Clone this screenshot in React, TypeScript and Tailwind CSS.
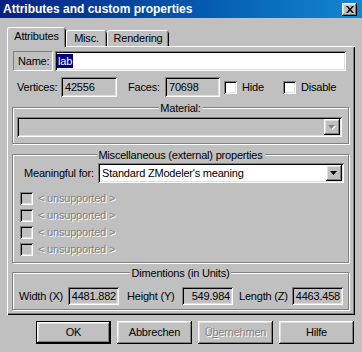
import React from "react";

const raised =
  "shadow-[inset_-1px_-1px_0_#000,inset_1px_1px_0_#fff,inset_-2px_-2px_0_#808080,inset_2px_2px_0_#dfdfdf]";
const sunken =
  "shadow-[inset_1px_1px_0_#808080,inset_-1px_-1px_0_#fff,inset_2px_2px_0_#000,inset_-2px_-2px_0_#dfdfdf]";
const etched = "border border-[#808080] shadow-[inset_1px_1px_0_#fff,1px_1px_0_#fff]";
const disabledText = "text-[#808080] [text-shadow:1px_1px_0_#fff]";

function Check({ disabled = false }: { disabled?: boolean }) {
  return (
    <div
      className={`w-[13px] h-[13px] shrink-0 ${sunken} ${disabled ? "bg-[#c0c0c0]" : "bg-white"}`}
    />
  );
}

function Arrow({ disabled = false }: { disabled?: boolean }) {
  return (
    <div className={`w-[16px] h-[16px] bg-[#c0c0c0] ${raised} flex items-center justify-center`}>
      <svg width="8" height="5" viewBox="0 0 8 5">
        {disabled && <path d="M1 1h7L4.5 5z" fill="#fff" />}
        <path d="M0 0h7L3.5 4z" fill={disabled ? "#808080" : "#000"} />
      </svg>
    </div>
  );
}

function Group({
  label,
  className,
  children,
}: {
  label: string;
  className: string;
  children?: React.ReactNode;
}) {
  return (
    <div className={`relative ${etched} ${className}`}>
      <span className="absolute left-1/2 top-0 -translate-x-1/2 -translate-y-1/2 bg-[#c0c0c0] px-[2px] leading-[13px] whitespace-nowrap">
        {label}
      </span>
      {children}
    </div>
  );
}

function Btn({
  children,
  def = false,
  disabled = false,
}: {
  children: React.ReactNode;
  def?: boolean;
  disabled?: boolean;
}) {
  return (
    <div
      className={`w-[75px] h-[23px] flex ${def ? "border border-black" : ""} bg-[#c0c0c0]`}
    >
      <div className={`flex-1 flex items-center justify-center ${raised} ${disabled ? disabledText : ""}`}>
        {children}
      </div>
    </div>
  );
}

export default function App() {
  return (
    <div className="w-[362px] h-[352px] bg-[#c0c0c0] flex flex-col overflow-hidden font-['Liberation_Sans',Arial,sans-serif] text-[11px] tracking-[-0.2px] text-black leading-[13px]">
      {/* title bar */}
      <div className="h-[18px] shrink-0 flex items-center bg-gradient-to-r from-[#0a1f84] to-[#1487d2] pl-[3px] pr-[5px]">
        <span className="text-white font-bold text-[12px] tracking-normal flex-1 whitespace-nowrap">
          Attributes and custom properties
        </span>
        <div className={`w-[15px] h-[13px] bg-[#c0c0c0] ${raised} flex items-center justify-center`}>
          <svg width="8" height="7" viewBox="0 0 8 7">
            <path d="M0 0h2l2 2.5L6 0h2L5 3.5 8 7H6L4 4.5 2 7H0l3-3.5z" fill="#000" />
          </svg>
        </div>
      </div>

      {/* tabs */}
      <div className="mt-[9px] h-[19px] ml-[7px] flex items-end">
        <div className="relative z-10 w-[59px] h-[20px] -mb-[1px] bg-[#c0c0c0] rounded-t-[3px] shadow-[inset_1px_0_0_#fff,inset_0_1px_0_#fff,inset_-1px_0_0_#000,inset_-2px_0_0_#808080] flex items-center justify-center pb-[2px]">
          Attributes
        </div>
        <div className="w-[41px] h-[16px] rounded-t-[3px] shadow-[inset_1px_0_0_#fff,inset_0_1px_0_#fff,inset_-1px_0_0_#000,inset_-2px_0_0_#808080] flex items-center justify-center">
          Misc.
        </div>
        <div className="w-[62px] h-[16px] rounded-t-[3px] shadow-[inset_1px_0_0_#fff,inset_0_1px_0_#fff,inset_-1px_0_0_#000,inset_-2px_0_0_#808080] flex items-center justify-center">
          Rendering
        </div>
      </div>

      {/* panel */}
      <div className="ml-[7px] w-[348px] h-[269px] shrink-0 flex flex-col shadow-[inset_1px_1px_0_#fff,inset_-1px_-1px_0_#000,inset_-2px_-2px_0_#808080]">
        {/* name row */}
        <div className="mt-[5px] ml-[6px] flex h-[20px]">
          <div className="w-[40px] h-[20px] border border-[#808080] border-r-white border-b-white flex items-center pl-[4px]">
            Name:
          </div>
          <div className={`ml-[2px] w-[291px] h-[20px] bg-white ${sunken} flex items-center pl-[2px]`}>
            <span className="bg-[#000080] text-white px-[1px] leading-[14px]">lab</span>
          </div>
        </div>

        {/* vertices row */}
        <div className="mt-[6px] ml-[10px] flex items-center h-[20px]">
          <span className="w-[44px]">Vertices:</span>
          <div className={`w-[56px] h-[20px] ${sunken} flex items-center pl-[4px]`}>42556</div>
          <span className="ml-[11px] w-[37px]">Faces:</span>
          <div className={`w-[55px] h-[20px] ${sunken} flex items-center pl-[4px]`}>70698</div>
          <div className="ml-[4px]">
            <Check />
          </div>
          <span className="ml-[5px] w-[41px]">Hide</span>
          <Check />
          <span className="ml-[5px]">Disable</span>
        </div>

        {/* material */}
        <Group label="Material:" className="mt-[10px] ml-[5px] w-[337px] h-[37px] shrink-0">
          <div className={`mt-[9px] ml-[4px] w-[325px] h-[20px] bg-[#c0c0c0] ${sunken} flex items-center justify-end pr-[2px]`}>
            <Arrow disabled />
          </div>
        </Group>

        {/* misc */}
        <Group
          label="Miscellaneous (external) properties"
          className="mt-[10px] ml-[5px] w-[337px] h-[109px] shrink-0 flex flex-col"
        >
          <div className="mt-[8px] ml-[11px] flex items-center h-[20px]">
            <span className="w-[74px] whitespace-nowrap">Meaningful for:</span>
            <div className={`w-[246px] h-[20px] bg-white ${sunken} flex items-center pl-[4px] pr-[2px]`}>
              <span className="flex-1">Standard ZModeler's meaning</span>
              <Arrow />
            </div>
          </div>
          {[9, 4, 4, 4].map((m, i) => (
            <div
              key={i}
              className={`ml-[7px] flex items-center h-[13px] ${
                m === 9 ? "mt-[9px]" : "mt-[4px]"
              }`}
            >
              <Check disabled />
              <span className={`ml-[5px] ${disabledText}`}>&lt; unsupported &gt;</span>
            </div>
          ))}
        </Group>

        {/* dimensions */}
        <Group
          label="Dimentions (in Units)"
          className="mt-[9px] ml-[5px] w-[337px] h-[38px] shrink-0 flex flex-col"
        >
          <div className="mt-[14px] ml-[6px] flex items-center h-[18px]">
            <span className="w-[49px] whitespace-nowrap">Width (X)</span>
            <div className={`w-[51px] h-[18px] ${sunken} flex items-center justify-end pr-[3px]`}>4481.882</div>
            <span className="ml-[8px] w-[55px] whitespace-nowrap">Height (Y)</span>
            <div className={`w-[51px] h-[18px] ${sunken} flex items-center justify-end pr-[3px]`}>549.984</div>
            <span className="ml-[6px] w-[53px] whitespace-nowrap">Length (Z)</span>
            <div className={`w-[51px] h-[18px] ${sunken} flex items-center justify-end pr-[3px]`}>4463.458</div>
          </div>
        </Group>
      </div>

      {/* buttons */}
      <div className="mt-[6px] ml-[36px] flex gap-[6px]">
        <Btn def>OK</Btn>
        <Btn>Abbrechen</Btn>
        <Btn disabled>
          <span>
            Ü<span className="underline">b</span>ernehmen
          </span>
        </Btn>
        <Btn>Hilfe</Btn>
      </div>
    </div>
  );
}
